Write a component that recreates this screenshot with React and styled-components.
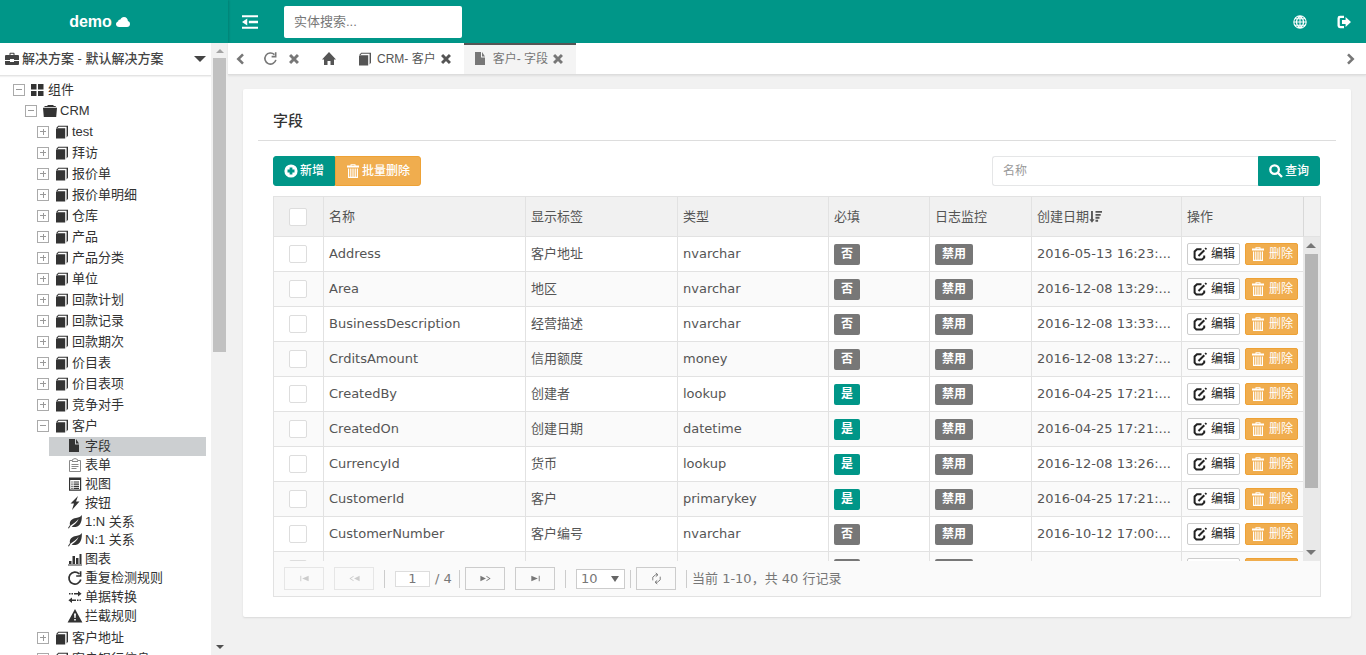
import { Fragment } from "react";
import styled, { createGlobalStyle, css } from "styled-components";

const solid = {
    cloud: "M3.2 12C1.4 12 0 10.8 0 9.2C0 7.9 .9 6.9 2.1 6.6C2.1 5.2 3.2 4.4 4.4 4.6C5 3 6.3 2 8 2C10.3 2 11.9 3.8 11.9 6C13.2 6.4 14 7.5 14 8.9C14 10.7 12.7 12 11 12Z",
    briefcase: "M4.5 3V1.5Q4.5 .8 5.2 .8H8.8Q9.5 .8 9.5 1.5V3H13Q14 3 14 4V8H9V7H5V8H0V4Q0 3 1 3ZM5.5 3H8.5V1.8H5.5ZM0 9H5V10H9V9H14V12Q14 13 13 13H1Q0 13 0 12Z",
    blocks: "M0 1H5.5V6.5H0ZM7 1H12.5V6.5H7ZM0 8H5.5V13H0ZM7 8H12.5V13H7Z",
    folder: "M0 3.8H14L13.2 13H.8ZM1 3L2 2H4L5 1H10L11 2H12.5L13 3Z",
    book: "M1 4.2L1.4 3.2H10.2V13.4H1ZM1.2 3L3.2 .8H13V10.8L11.6 12.4V1.8H3.6L2.6 3Z",
    file: "M1 0H7V5.5H11V13H1ZM8 0L11 4.5H8Z",
    home: "M7 0L14 7.5H12V13H8.5V9H5.5V13H2V7.5H0Z",
    flash: "M10 0L2.5 7.5H6L4 14L11.5 5.5H8Z",
    chart: "M1 9H3.5V13H1ZM4.5 4H7V13H4.5ZM8 6H10.5V13H8ZM11.5 2H13.5V13H11.5ZM0 12.5H14V13.5H0Z",
    warning: "M7 0L14.4 13.5H-.4ZM6 4.5L6.4 9H7.6L8 4.5ZM6.2 10V11.6H7.8V10Z",
    transfer: "M1 3H2.5V4.6H1ZM3.5 3H5V4.6H3.5ZM6 3H10V1L13.6 3.8L10 6.6V4.6H6ZM13 9.4H11.5V11H13ZM10.5 9.4H9V11H10.5ZM8 9.4H4V7.4L.4 10.2L4 13V11H8Z",
    leaf: "M13.8 0C14.2 4.5 13 11.5 7.5 12C5.8 12.2 4.6 11.8 3.6 11.4C6.6 9.6 9.4 7.4 10.6 3.8C8.6 6.6 5.6 8.4 2.6 10.6L.9 13.4L0 12.9L2 10C1 6.4 4 3.6 8 3C11 2.6 12.5 1.8 13.8 0Z",
    plus: "M7 .4A6.6 6.6 0 1 1 7 13.6A6.6 6.6 0 1 1 7 .4ZM5.6 3.5V5.6H3.5V8.4H5.6V10.5H8.4V8.4H10.5V5.6H8.4V3.5Z",
    trash: "M4.5 1.6V.2H9.5V1.6H13V3.6H1V1.6ZM5.5 1.6H8.5V1.1H5.5ZM2 4.6H12V14H2ZM3.2 4.6V12.8H4.2V4.6ZM5.4 4.6V12.8H6.4V4.6ZM7.6 4.6V12.8H8.6V4.6ZM9.8 4.6V12.8H10.8V4.6Z",
    logout: "M7 .8V3H3.6Q2.8 3 2.8 3.8V10.2Q2.8 11 3.6 11H7V13.2H3Q.5 13.2 .5 10.8V3.2Q.5 .8 3 .8ZM5 5H8.6V2L14 7L8.6 12V9H5Z",
    sort: "M2.2 1H4.2V10H6L3.2 13.6L.4 10H2.2ZM7 1H14V3H7ZM7 4.2H12.6V6.2H7ZM7 7.4H11.3V9.4H7ZM7 10.6H9.8V12.6H7Z",
    first: "M2.5 4H3.5V10H2.5ZM11.5 4V10L4.5 7Z",
    prev: "M12.5 4V10L6.5 7ZM6 4L1.5 7L6 10V9L3 7L6 5Z",
    next: "M1.5 4V10L7.5 7ZM8 4L12.5 7L8 10V9L11 7L8 5Z",
    last: "M11.5 4H10.5V10H11.5ZM2.5 4V10L9.5 7Z",
    indent: "M0 1H14V2.8H0ZM6 6H14V8H6ZM0 11.2H14V13H0ZM4.6 4V10L0 7Z",
};

// [stroke width, path]
const lines = {
    close: [3.4, "M2.4 2.4L11.6 11.6M11.6 2.4L2.4 11.6"],
    left: [3, "M10.5 1.5L5 7L10.5 12.5"],
    right: [3, "M3.5 1.5L9 7L3.5 12.5"],
    refresh: [1.7, "M12.8 8.5A6 6 0 1 1 11.2 2.8M12.6 .2V5H8.2"],
    form: [1, "M1.5 2.5H4.5V1.5L7 .5L9.5 1.5V2.5H12.5V13.5H1.5ZM4 3.5H10M3.5 6.5H10.5M3.5 8.5H10.5M3.5 10.5H8.5"],
    list: [1.2, "M1.6 1.2H12.6V13.2H1.6ZM1.6 2.4H12.6M3.4 5H4.6M5.6 5H11M3.4 7.2H4.6M5.6 7.2H11M3.4 9.4H4.6M5.6 9.4H11M3.4 11.4H4.6M5.6 11.4H11"],
    globe: [1.1, "M7 .8A6.2 6.2 0 1 1 7 13.2A6.2 6.2 0 1 1 7 .8ZM7 .8V13.2M.8 7H13.2M2 3.8H12M2 10.2H12M7 .8Q-.2 7 7 13.2M7 .8Q14.2 7 7 13.2"],
    search: [2.3, "M5.6 1.3A4.3 4.3 0 1 1 5.6 9.9A4.3 4.3 0 1 1 5.6 1.3ZM8.8 8.8L13 13"],
    edit: [2, "M8.5 2.2H4L1.6 4.5V10.6L3.4 12.6H9L11.2 10.5V8.5M5.5 9L11.3 3.2M12.2 2.3L13.4 1.1"],
    reload: [1, "M3 9V5.5L6 3H8M6.2 1L8.6 3L6.2 5M11 5V8.5L8 11H6M7.8 9L5.4 11L7.8 13"],
};

function Icon({ name, size = 14 }) {
    const line = lines[name];
    return (
        <Svg viewBox="0 0 14 14" width={size} height={size} aria-hidden="true">
            {line
                ? <path d={line[1]} fill="none" stroke="currentColor" strokeWidth={line[0]} />
                : <path d={solid[name]} fill="currentColor" fillRule="evenodd" />}
        </Svg>
    );
}

const entitiesBefore = [
    "test", "拜访", "报价单", "报价单明细", "仓库", "产品", "产品分类", "单位",
    "回款计划", "回款记录", "回款期次", "价目表", "价目表项", "竞争对手",
];
const entitiesAfter = ["客户地址", "客户银行信息"];

const customerParts = [
    ["file", "字段"],
    ["form", "表单"],
    ["list", "视图"],
    ["flash", "按钮"],
    ["leaf", "1:N 关系"],
    ["leaf", "N:1 关系"],
    ["chart", "图表"],
    ["refresh", "重复检测规则"],
    ["transfer", "单据转换"],
    ["warning", "拦截规则"],
];

const fields = [
    ["Address", "客户地址", "nvarchar", false, "2016-05-13 16:23:..."],
    ["Area", "地区", "nvarchar", false, "2016-12-08 13:29:..."],
    ["BusinessDescription", "经营描述", "nvarchar", false, "2016-12-08 13:33:..."],
    ["CrditsAmount", "信用额度", "money", false, "2016-12-08 13:27:..."],
    ["CreatedBy", "创建者", "lookup", true, "2016-04-25 17:21:..."],
    ["CreatedOn", "创建日期", "datetime", true, "2016-04-25 17:21:..."],
    ["CurrencyId", "货币", "lookup", true, "2016-12-08 13:26:..."],
    ["CustomerId", "客户", "primarykey", true, "2016-04-25 17:21:..."],
    ["CustomerNumber", "客户编号", "nvarchar", false, "2016-10-12 17:00:..."],
    ["", "", "", false, ""],
];

const columns = [50, 202, 152, 151, 101, 102, 150, 122];

function TreeRow({ level, icon, open, children }) {
    return (
        <Row $level={level}>
            <Toggle type="button" $open={open} aria-label={`${children} 展开`} aria-expanded={!!open} />
            <Icon name={icon} />
            <TreeLink href="#">{children}</TreeLink>
        </Row>
    );
}

function Sidebar() {
    return (
        <Side>
            <SideMain>
                <Solution type="button">
                    <Icon name="briefcase" />
                    <span>解决方案 - 默认解决方案</span>
                    <Caret />
                </Solution>
                <Tree>
                    <TreeRow level={0} icon="blocks" open>组件</TreeRow>
                    <TreeRow level={1} icon="folder" open>CRM</TreeRow>
                    {entitiesBefore.map((name) => (
                        <TreeRow key={name} level={2} icon="book">{name}</TreeRow>
                    ))}
                    <TreeRow level={2} icon="book" open>客户</TreeRow>
                    <Parts>
                        {customerParts.map(([icon, name], i) => (
                            <Part key={name} href="#" $active={i === 0} $pale={icon === "form"}>
                                <Icon name={icon} />
                                {name}
                            </Part>
                        ))}
                    </Parts>
                    {entitiesAfter.map((name) => (
                        <TreeRow key={name} level={2} icon="book">{name}</TreeRow>
                    ))}
                </Tree>
            </SideMain>
            <ScrollBar>
                <ScrollArrow $up />
                <Thumb $share={49} />
                <ScrollArrow $end />
            </ScrollBar>
        </Side>
    );
}

function Tabs() {
    return (
        <TabBar>
            <TabTool type="button" aria-label="向左" $width={24}><Icon name="left" size={12} /></TabTool>
            <TabTool type="button" aria-label="刷新" $width={36}><Icon name="refresh" size={13} /></TabTool>
            <TabTool type="button" aria-label="关闭" $width={12}><Icon name="close" size={12} /></TabTool>
            <TabList>
                <Tab>
                    <TabLink href="#" aria-label="首页"><Icon name="home" /></TabLink>
                </Tab>
                <Tab>
                    <TabLink href="#"><Icon name="book" />CRM- 客户</TabLink>
                    <TabClose type="button" aria-label="关闭 CRM- 客户"><Icon name="close" size={12} /></TabClose>
                </Tab>
                <Tab $active>
                    <TabLink href="#"><Icon name="file" />客户- 字段</TabLink>
                    <TabClose type="button" aria-label="关闭 客户- 字段"><Icon name="close" size={12} /></TabClose>
                </Tab>
            </TabList>
            <TabEnd type="button" aria-label="向右"><Icon name="right" size={12} /></TabEnd>
        </TabBar>
    );
}

function FieldTable() {
    return (
        <Grid>
            <GridBody>
                <Viewport>
                    <Table>
                        <colgroup>
                            {columns.map((width, i) => <Col key={i} $width={width} />)}
                        </colgroup>
                        <thead>
                            <tr>
                                <Th><Check type="checkbox" aria-label="全选" /></Th>
                                <Th>名称</Th>
                                <Th>显示标签</Th>
                                <Th>类型</Th>
                                <Th>必填</Th>
                                <Th>日志监控</Th>
                                <Th><SortLabel>创建日期<Icon name="sort" size={13} /></SortLabel></Th>
                                <Th>操作</Th>
                            </tr>
                        </thead>
                        <tbody>
                            {fields.map(([name, label, type, required, created], i) => (
                                <BodyRow key={i}>
                                    <Td><Check type="checkbox" aria-label={name || "选择"} /></Td>
                                    <Td>{name}</Td>
                                    <Td>{label}</Td>
                                    <Td>{type}</Td>
                                    <Td><Badge $on={required}>{required ? "是" : "否"}</Badge></Td>
                                    <Td><Badge>禁用</Badge></Td>
                                    <Td>{created}</Td>
                                    <Td>
                                        <Actions>
                                            <SmallButton type="button"><Icon name="edit" />编辑</SmallButton>
                                            <SmallButton type="button" $warn><Icon name="trash" />删除</SmallButton>
                                        </Actions>
                                    </Td>
                                </BodyRow>
                            ))}
                        </tbody>
                    </Table>
                </Viewport>
                <GridSide>
                    <GridCorner />
                    <ScrollBar $dark>
                        <ScrollArrow $up $dark />
                        <Thumb $share={75} $dark />
                        <ScrollArrow $end $dark />
                    </ScrollBar>
                </GridSide>
            </GridBody>
            <Pager>
                <PageButton type="button" disabled aria-label="首页"><Icon name="first" size={13} /></PageButton>
                <PageButton type="button" disabled aria-label="上一页"><Icon name="prev" size={13} /></PageButton>
                <Divider />
                <PageNumber>
                    <PageInput aria-label="页码" defaultValue="1" />
                    / 4
                </PageNumber>
                <Divider $tight />
                <PageButton type="button" aria-label="下一页"><Icon name="next" size={13} /></PageButton>
                <PageButton type="button" aria-label="末页"><Icon name="last" size={13} /></PageButton>
                <Divider />
                <SizeBox>
                    <SizeSelect aria-label="每页行数" defaultValue="10">
                        <option>10</option>
                        <option>20</option>
                        <option>50</option>
                    </SizeSelect>
                    <SizeArrow />
                </SizeBox>
                <Divider $tight />
                <PageButton type="button" aria-label="刷新"><Icon name="reload" size={13} /></PageButton>
                <Divider $last />
                <span>当前 1-10，共 40 行记录</span>
            </Pager>
        </Grid>
    );
}

export default function App() {
    return (
        <Fragment>
            <GlobalStyle />
            <Page>
                <Header>
                    <Brand>demo <Icon name="cloud" /></Brand>
                    <HeaderButton type="button" aria-label="菜单"><Icon name="indent" size={16} /></HeaderButton>
                    <EntitySearch placeholder="实体搜索..." aria-label="实体搜索" />
                    <HeaderTools>
                        <HeaderButton type="button" aria-label="语言"><Icon name="globe" /></HeaderButton>
                        <HeaderButton type="button" aria-label="退出"><Icon name="logout" /></HeaderButton>
                    </HeaderTools>
                </Header>
                <Content>
                    <Sidebar />
                    <Main>
                        <Tabs />
                        <Card>
                            <Title>字段</Title>
                            <CardBody>
                                <Toolbar>
                                    <ToolButton type="button" $side="left"><Icon name="plus" />新增</ToolButton>
                                    <ToolButton type="button" $side="right" $warn><Icon name="trash" />批量删除</ToolButton>
                                    <Filter>
                                        <FilterInput placeholder="名称" aria-label="名称" />
                                        <ToolButton type="submit" $side="right"><Icon name="search" />查询</ToolButton>
                                    </Filter>
                                </Toolbar>
                                <FieldTable />
                            </CardBody>
                        </Card>
                    </Main>
                </Content>
            </Page>
        </Fragment>
    );
}

const GlobalStyle = createGlobalStyle`
    * {
        box-sizing: border-box;
    }
    body {
        margin: 0;
        background: #f1f1f1;
        color: #333;
        font: 13px/20px "Liberation Sans", "Noto Sans CJK SC", sans-serif;
    }
    button, input, select {
        margin: 0;
        font: inherit;
        color: inherit;
    }
    button {
        padding: 0;
        border: 0;
        background: none;
        cursor: pointer;
    }
    a {
        color: inherit;
        text-decoration: none;
    }
`

const Svg = styled.svg`
    display: block;
    flex: none;
    overflow: visible;
`

const Page = styled.div`
    display: flex;
    flex-direction: column;
    height: 100vh;
    overflow: hidden;
`

const Header = styled.header`
    display: flex;
    flex: none;
    align-items: center;
    height: 43px;
    background: #009688;
    color: #fff;
`

const Brand = styled.div`
    display: flex;
    align-items: center;
    justify-content: center;
    gap: 4px;
    width: 228px;
    height: 43px;
    padding-right: 29px;
    box-shadow: 1px 0 2px rgba(0, 0, 0, 0.15);
    font-size: 16px;
    font-weight: bold;
`

const HeaderButton = styled.button`
    display: flex;
    justify-content: center;
    width: 44px;
`

const EntitySearch = styled.input`
    width: 178px;
    height: 32px;
    margin-left: 12px;
    padding: 0 10px;
    border: 0;
    border-radius: 2px;
    background: #fff;
    color: #555;

    &::placeholder {
        color: #777;
    }
`

const HeaderTools = styled.div`
    display: flex;
    margin-left: auto;
`

const Content = styled.div`
    display: flex;
    flex: 1;
    min-height: 0;
`

const Side = styled.aside`
    display: flex;
    flex: none;
    width: 228px;
    background: #fff;
`

const SideMain = styled.div`
    flex: 1;
    min-width: 0;
    overflow: hidden;
`

const Solution = styled.button`
    display: flex;
    align-items: center;
    gap: 3px;
    width: 100%;
    height: 33px;
    padding: 0 5px;
    border-bottom: 1px solid #e4e4e4;
    box-shadow: 0 1px 1px rgba(0, 0, 0, 0.05);
    color: #444;
    font-weight: 500;
`

const Caret = styled.i`
    margin-left: auto;
    border: 6px solid transparent;
    border-top-color: #444;
    border-bottom: 0;
`

const Tree = styled.nav`
    padding: 3px 5px 0 0;
`

const Row = styled.div`
    display: flex;
    align-items: center;
    height: 21px;
    padding-left: ${({ $level }) => 13 + $level * 12}px;
`

const Toggle = styled.button`
    flex: none;
    width: 12px;
    height: 12px;
    margin-right: 6px;
    border: 1px solid #aaa;
    background:
        linear-gradient(#999, #999) center / 6px 1px no-repeat
        ${({ $open }) => !$open && ", linear-gradient(#999, #999) center / 1px 6px no-repeat"};
`

const TreeLink = styled.a`
    margin-left: 3px;
    white-space: nowrap;
`

const Parts = styled.div`
    display: grid;
    grid-auto-rows: 1fr;
    height: 188px;
    margin: 1px 0 2px 49px;
    line-height: 18px;
`

const Part = styled.a`
    display: flex;
    align-items: center;
    gap: 3px;
    padding-left: 19px;
    background: ${({ $active }) => ($active ? "#cccfd1" : "none")};

    ${Svg} {
        color: ${({ $pale }) => ($pale ? "#888" : "inherit")};
    }
`

const ScrollBar = styled.div`
    display: flex;
    flex: none;
    flex-direction: column;
    align-items: center;
    gap: 5px;
    width: 17px;
    padding: 6px 0;
    background: #f1f1f1;

    ${({ $dark }) => $dark && css`
        flex: 1;
        gap: 6px;
        width: 16px;
        background: #e9e9e9;
    `}
`

const ScrollArrow = styled.i`
    flex: none;
    border: ${({ $dark }) => ($dark ? 5 : 4)}px solid transparent;
    ${({ $up, $dark }) => $up
        ? css`
            border-top: 0;
            border-bottom-color: ${$dark ? "#777" : "#a3a3a3"};
        `
        : css`
            border-bottom: 0;
            border-top-color: ${$dark ? "#777" : "#505050"};
        `}
    ${({ $end }) => $end && "margin-top: auto;"}
`

const Thumb = styled.i`
    width: 13px;
    height: ${({ $share }) => $share}%;
    background: ${({ $dark }) => ($dark ? "#b5b5b5" : "#c1c1c1")};
`

const Main = styled.main`
    display: flex;
    flex: 1;
    flex-direction: column;
    min-width: 0;
`

const TabBar = styled.div`
    display: flex;
    align-items: center;
    height: 32px;
    border-bottom: 1px solid #ddd;
    box-shadow: 0 1px 2px rgba(0, 0, 0, 0.08);
    background: #fff;
    color: #777;
`

const TabTool = styled.button`
    display: flex;
    justify-content: center;
    width: ${({ $width }) => $width}px;
`

const TabList = styled.div`
    display: flex;
    margin-left: 12px;
    font-size: 12px;
`

const Tab = styled.div`
    display: flex;
    align-items: center;
    gap: 4px;
    height: 31px;
    padding: 0 12px 2px 10px;
    border-top: 2px solid transparent;
    color: #555;

    ${({ $active }) => $active && css`
        border-top-color: #555;
        background: #f4f4f4;
        color: #777;
    `}
`

const TabLink = styled.a`
    display: flex;
    align-items: center;
    gap: 5px;
`

const TabClose = styled.button`
    display: flex;
`

const TabEnd = styled(TabTool)`
    width: 30px;
    margin-left: auto;
`

const Card = styled.section`
    margin: 14px 15px;
    padding: 15px 15px 20px;
    border-radius: 2px;
    box-shadow: 0 1px 2px rgba(0, 0, 0, 0.1);
    background: #fff;
    font-family: "DejaVu Sans", "Noto Sans CJK SC", sans-serif;
    color: #555;
`

const Title = styled.h1`
    height: 37px;
    margin: 0;
    padding: 7px 15px 0;
    border-bottom: 1px solid #ddd;
    color: #333;
    font-size: 15px;
    font-weight: 500;
    line-height: 20px;
`

const CardBody = styled.div`
    padding: 15px 15px 0;
`

const Toolbar = styled.div`
    display: flex;
    margin-bottom: 10px;
`

const ToolButton = styled.button`
    display: flex;
    align-items: center;
    gap: 2px;
    height: 30px;
    padding: 0 10px;
    border: 1px solid ${({ $warn }) => ($warn ? "#eea236" : "#009688")};
    border-radius: ${({ $side }) => ($side === "left" ? "3px 0 0 3px" : "0 3px 3px 0")};
    background: ${({ $warn }) => ($warn ? "#f0ad4e" : "#009688")};
    color: #fff;
    font-size: 12px;
    font-weight: 500;
`

const Filter = styled.form`
    display: flex;
    width: 328px;
    margin: 0 1px 0 auto;
`

const FilterInput = styled.input`
    flex: 1;
    min-width: 0;
    height: 30px;
    padding: 0 10px;
    border: 1px solid #e5e6e7;
    border-right: 0;
    border-radius: 3px 0 0 3px;
    background: #fff;
    font-size: 12px;

    &::placeholder {
        color: #999;
    }
`

const Grid = styled.div`
    border: 1px solid #e2e2e2;
`

const GridBody = styled.div`
    display: flex;
    height: 364px;
`

const Viewport = styled.div`
    flex: 1;
    min-width: 0;
    overflow-y: auto;
    scrollbar-width: none;
`

const Table = styled.table`
    width: 100%;
    border-spacing: 0;
    table-layout: fixed;
`

const Col = styled.col`
    width: ${({ $width }) => $width}px;
`

const cell = css`
    padding: 0 5px;
    border-right: 1px solid #e2e2e2;
    border-bottom: 1px solid #e2e2e2;
    text-align: left;
    white-space: nowrap;

    &:first-child {
        padding: 0 15px;
    }

    &:last-child {
        border-right: 0;
    }
`

const Th = styled.th`
    ${cell}
    position: sticky;
    top: 0;
    z-index: 1;
    height: 40px;
    background: #f1f1f1;
    font-weight: normal;
`

const Td = styled.td`
    ${cell}
    height: 35px;
`

const BodyRow = styled.tr`
    background: #fff;

    &:nth-child(even) {
        background: #fafafa;
    }
`

const Check = styled.input`
    display: block;
    width: 18px;
    height: 18px;
    margin: 0;
    border: 1px solid #ddd;
    border-radius: 2px;
    background: #fff;
    appearance: none;
`

const SortLabel = styled.span`
    display: flex;
    align-items: center;
`

const Badge = styled.span`
    display: block;
    width: fit-content;
    padding: 0 7px;
    border-radius: 2px;
    background: ${({ $on }) => ($on ? "#009688" : "#777")};
    color: #fff;
    font-size: 12px;
    font-weight: bold;
    line-height: 21px;
`

const Actions = styled.div`
    display: flex;
    gap: 5px;
`

const SmallButton = styled.button`
    display: flex;
    align-items: center;
    justify-content: space-between;
    width: 53px;
    height: 22px;
    padding: 0 4px 0 5px;
    border: 1px solid ${({ $warn }) => ($warn ? "#eea236" : "#ccc")};
    border-radius: 2px;
    background: ${({ $warn }) => ($warn ? "#f0ad4e" : "#fff")};
    color: ${({ $warn }) => ($warn ? "#fff" : "#222")};
    font-size: 12px;
`

const GridSide = styled.div`
    display: flex;
    flex-direction: column;
    width: 17px;
    background: #e9e9e9;
`

const GridCorner = styled.div`
    height: 40px;
    border-bottom: 1px solid #e2e2e2;
    border-left: 1px solid #d8d8d8;
    background: #f1f1f1;
`

const Pager = styled.div`
    display: flex;
    align-items: center;
    height: 35px;
    padding-left: 10px;
    background: #fafafa;
    color: #777;
`

const PageButton = styled.button`
    display: flex;
    align-items: center;
    justify-content: center;
    width: 40px;
    height: 23px;
    border: 1px solid #ccc;

    & + & {
        margin-left: 10px;
    }

    &:disabled {
        border-color: #e6e6e6;
        color: #ccc;
    }
`

const Divider = styled.i`
    width: 1px;
    height: 18px;
    margin: 0 10px;
    background: #ccc;

    ${({ $tight }) => $tight && "margin: 0 5px;"}
    ${({ $last }) => $last && "margin-right: 5px;"}
`

const PageNumber = styled.label`
    display: flex;
    align-items: center;
    gap: 5px;
    min-width: 59px;
`

const PageInput = styled.input`
    width: 35px;
    height: 16px;
    padding: 0;
    border: 1px solid #ddd;
    background: #fff;
    text-align: center;
`

const SizeBox = styled.div`
    position: relative;
`

const SizeSelect = styled.select`
    display: block;
    width: 49px;
    height: 20px;
    padding: 0 4px;
    border: 1px solid #ccc;
    border-radius: 0;
    background: #fff;
    line-height: 18px;
    appearance: none;
`

const SizeArrow = styled.i`
    position: absolute;
    top: 7px;
    right: 6px;
    border: 4px solid transparent;
    border-top: 6px solid #666;
    border-bottom: 0;
    pointer-events: none;
`
